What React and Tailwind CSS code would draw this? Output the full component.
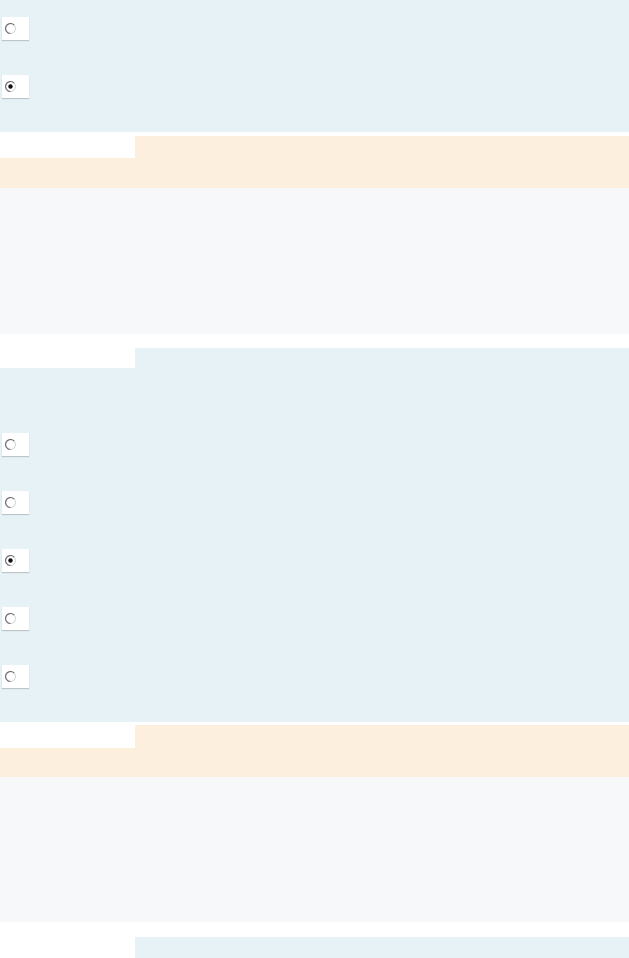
import React from 'react';

function Radio({ checked }) {
  return (
    <div className="w-[27px] h-[23px] ml-[2px] bg-white shadow-[0_1px_1px_rgba(0,0,0,0.18)] flex items-center pl-[2px]">
      <svg width="13" height="13" viewBox="0 0 13 13">
        <circle cx="6.5" cy="6.5" r="5" fill="#fff" stroke="#cfcfcf" strokeWidth="1" />
        <path d="M10.2 3.1 A5 5 0 1 0 6.5 11.5" fill="none" stroke="#6e6e6e" strokeWidth="1.2" />
        {checked && <circle cx="6.5" cy="6.5" r="2.2" fill="#111" />}
      </svg>
    </div>
  );
}

function RadioGroup({ items, top = 0 }) {
  return (
    <div className="bg-[#e6f2f5] pb-[16px]" style={{ paddingTop: top }}>
      {items.map((c, i) => (
        <div key={i} className="h-[58px] pt-[17px]">
          <Radio checked={c} />
        </div>
      ))}
    </div>
  );
}

function Tab({ color, h }) {
  return (
    <div className="flex">
      <div className="w-[135px] bg-white" style={{ height: h }} />
      <div className={`flex-1 ${color}`} />
    </div>
  );
}

export default function App() {
  return (
    <div className="w-[629px] h-[958px] overflow-hidden bg-white">
      <RadioGroup items={[false, true]} />

      <div className="mt-[4px]">
        <Tab color="bg-[#fcefdd]" h={22} />
        <div className="h-[30px] bg-[#fcefdd]" />
      </div>
      <div className="h-[146px] bg-[#f7f8fa]" />

      <div className="mt-[14px]">
        <Tab color="bg-[#e6f2f5]" h={20} />
        <RadioGroup items={[false, false, true, false, false]} top={48} />
      </div>

      <div className="mt-[3px]">
        <Tab color="bg-[#fcefdd]" h={23} />
        <div className="h-[29px] bg-[#fcefdd]" />
      </div>
      <div className="h-[145px] bg-[#f7f8fa]" />

      <div className="mt-[15px]">
        <Tab color="bg-[#e6f2f5]" h={21} />
        <div className="h-[40px] bg-[#e6f2f5]" />
      </div>
    </div>
  );
}
